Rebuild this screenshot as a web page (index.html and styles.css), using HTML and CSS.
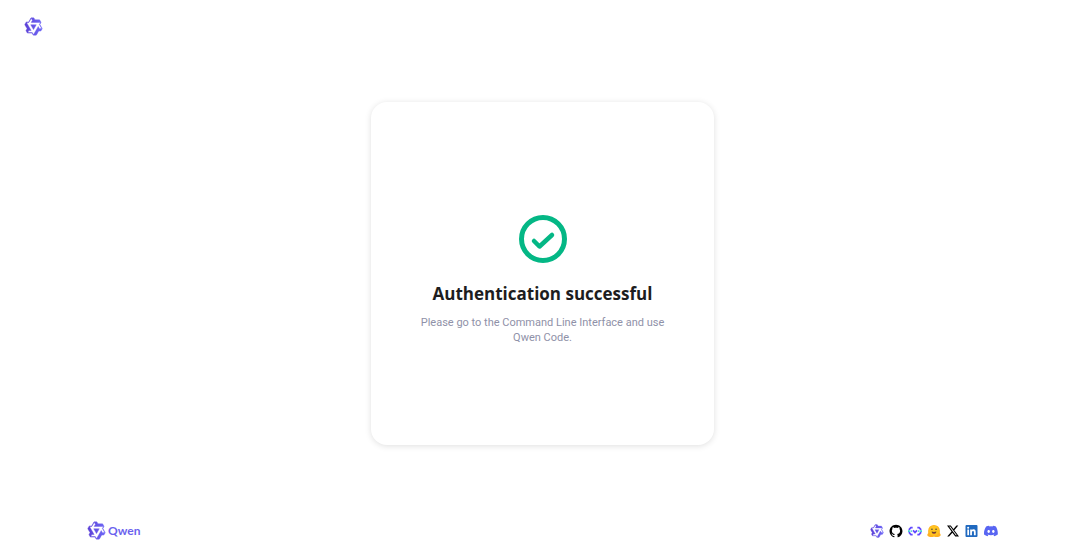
FILE: index.html
```html
<!DOCTYPE html>
<html lang="en">
<head>
<meta charset="utf-8">
<meta name="viewport" content="width=device-width, initial-scale=1">
<title>Authentication successful</title>
<link rel="stylesheet" href="styles.css">
</head>
<body>
<svg class="defs" aria-hidden="true">
  <defs>
    <linearGradient id="violet" x1="0" y1="0" x2="1" y2="0"><stop offset="0" stop-color="#5b3fd6"/><stop offset="1" stop-color="#6f69f7"/></linearGradient>
    <symbol id="qwen" viewBox="0 0 24 24"><path fill="url(#violet)" stroke="url(#violet)" stroke-width=".5" d="M12.604 1.34c.393.69.784 1.382 1.174 2.075a.18.18 0 00.157.091h5.552c.174 0 .322.11.446.327l1.454 2.57c.19.337.24.478.024.837-.26.43-.513.864-.76 1.3l-.367.658c-.106.196-.223.28-.04.512l2.652 4.637c.172.301.111.494-.043.77-.437.785-.882 1.564-1.335 2.34-.159.272-.352.375-.68.37-.777-.016-1.552-.01-2.327.016a.099.099 0 00-.081.05 575.097 575.097 0 01-2.705 4.74c-.169.293-.38.363-.725.364-.997.003-2.002.004-3.017.002a.537.537 0 01-.465-.271l-1.335-2.323a.09.09 0 00-.083-.049H4.982c-.285.03-.553-.001-.805-.092l-1.603-2.77a.543.543 0 01-.002-.54l1.207-2.12a.198.198 0 000-.197 550.951 550.951 0 01-1.875-3.272l-.79-1.395c-.16-.31-.173-.496.095-.965.465-.813.927-1.625 1.387-2.436.132-.234.304-.334.584-.335a338.3 338.3 0 012.589-.001.124.124 0 00.107-.063l2.806-4.895a.488.488 0 01.422-.246c.524-.001 1.053 0 1.583-.006L11.704 1c.341-.003.724.032.9.34zm-3.432.403a.06.06 0 00-.052.03L6.254 6.788a.157.157 0 01-.135.078H3.253c-.056 0-.07.025-.041.074l5.81 10.156c.025.042.013.062-.034.063l-2.795.015a.218.218 0 00-.2.116l-1.32 2.31c-.044.078-.021.118.068.118l5.716.008c.046 0 .08.02.104.061l1.403 2.454c.046.081.092.082.139 0l5.006-8.76.783-1.382a.055.055 0 01.096 0l1.424 2.53a.122.122 0 00.107.062l2.763-.02a.04.04 0 00.035-.02.041.041 0 000-.04l-2.9-5.086a.108.108 0 010-.113l.293-.507 1.12-1.977c.024-.041.012-.062-.035-.062H9.2c-.059 0-.073-.026-.043-.077l1.434-2.505a.107.107 0 000-.114L9.225 1.774a.06.06 0 00-.053-.031zm6.29 8.02c.046 0 .058.02.034.06l-.832 1.465-2.613 4.585a.056.056 0 01-.05.029.058.058 0 01-.05-.029L8.498 9.841c-.02-.034-.01-.052.028-.054l.216-.012 6.722-.012z"/></symbol>
  </defs>
</svg>
<header class="header">
  <a class="link" href="#" aria-label="Qwen home"><svg class="mark"><use href="#qwen"/></svg></a>
</header>
<main class="main">
  <section class="card">
    <svg class="status" viewBox="0 0 48 48" fill="none" stroke="#04b785" aria-hidden="true"><circle cx="24" cy="24" r="21.5" stroke-width="5"/><path d="M15 26l5.500 5.500L33 20" stroke-width="4.500" stroke-linecap="round" stroke-linejoin="round"/></svg>
    <h1 class="title">Authentication successful</h1>
    <p class="text">Please go to the Command Line Interface and use Qwen Code.</p>
  </section>
</main>
<footer class="footer">
  <a class="brand" href="#"><svg class="mark" aria-hidden="true"><use href="#qwen"/></svg><span>Qwen</span></a>
  <nav class="social" aria-label="Social links">
    <a class="link" href="#" aria-label="Qwen"><svg class="icon"><use href="#qwen"/></svg></a>
    <a class="link" href="#" aria-label="GitHub"><svg class="icon" viewBox="-1 -1 26 26"><path d="M12 .297c-6.630 0-12 5.373-12 12 0 5.303 3.438 9.800 8.205 11.385.6.113.82-.258.82-.577 0-.285-.010-1.040-.015-2.040-3.338.724-4.042-1.610-4.042-1.610C4.422 18.070 3.633 17.700 3.633 17.700c-1.087-.744.084-.729.084-.729 1.205.084 1.838 1.236 1.838 1.236 1.070 1.835 2.809 1.305 3.495.998.108-.776.417-1.305.76-1.605-2.665-.3-5.466-1.332-5.466-5.930 0-1.310.465-2.380 1.235-3.220-.135-.303-.54-1.523.105-3.176 0 0 1.005-.322 3.300 1.230.96-.267 1.980-.399 3-.405 1.020.006 2.040.138 3 .405 2.280-1.552 3.285-1.230 3.285-1.230.645 1.653.24 2.873.12 3.176.765.84 1.230 1.910 1.230 3.220 0 4.610-2.805 5.625-5.475 5.920.42.36.81 1.096.81 2.220 0 1.606-.015 2.896-.015 3.286 0 .315.21.69.825.57C20.565 22.092 24 17.592 24 12.297c0-6.627-5.373-12-12-12"/></svg></a>
    <a class="link" href="#" aria-label="ModelScope"><svg class="icon" viewBox="0 0 24 24" fill="none" stroke-width="3"><path stroke="#624aff" d="M8 6H5L1.500 10M8 18H5l-3.500-4M16 6h3l3.500 4M16 18h3l3.500-4M8.500 11l3.500 3.500 3.500-3.500"/><path stroke="#36cfd1" d="M0 12h3m18 0h3M4.500 12h2m11 0h2"/></svg></a>
    <a class="link" href="#" aria-label="Hugging Face"><svg class="icon" viewBox="0 0 24 24"><path fill="#ffb01f" d="M12 1.500A10 10 0 0 0 2 11.500c0 2 .1 3.500.1 4.500-1.300.8-1.800 2.500-1.200 4.200 1.600 2 5.600 2.600 8.600 2 .9-.3 1.500-.5 2.500-.5s1.600.2 2.500.5c3 .6 7 0 8.600-2 .6-1.700.1-3.400-1.200-4.200 0-1 .1-2.500.1-4.500a10 10 0 0 0-10-10z"/><circle cx="12" cy="11.500" r="8.700" fill="#ffc420"/><circle cx="8.500" cy="9" r="1.300" fill="#3a3b45"/><circle cx="15.500" cy="9" r="1.300" fill="#3a3b45"/><path fill="#6b4430" d="M8 13c2.500 1 5.500 1 8 0 0 2.500-1.700 4-4 4s-4-1.500-4-4z"/><path fill="#ef4e4e" d="M10 16c1-1 3-1 4 0-1.300 1-2.700 1-4 0z"/></svg></a>
    <a class="link" href="#" aria-label="X"><svg class="icon" viewBox="-2 -2 28 28"><path d="M18.901 1.153h3.680l-8.040 9.190L24 22.846h-7.406l-5.800-7.584-6.638 7.584H.474l8.600-9.830L0 1.154h7.594l5.243 6.932zM17.610 20.644h2.039L6.486 3.240H4.298z"/></svg></a>
    <a class="link" href="#" aria-label="LinkedIn"><svg class="icon" viewBox="-1 -2 28 28"><path fill="#2069bf" d="M22 0H2a2 2 0 0 0-2 2v20a2 2 0 0 0 2 2h20a2 2 0 0 0 2-2V2a2 2 0 0 0-2-2zM7.100 20.450H3.600V9h3.500zM5.300 7.430a2.060 2.060 0 1 1 0-4.130 2.060 2.060 0 0 1 0 4.130zM20.450 20.450h-3.560v-5.570c0-1.330 0-3.040-1.850-3.040s-2.140 1.450-2.140 2.940v5.670H9.350V9h3.410v1.560c.5-.9 1.600-1.850 3.370-1.850 3.600 0 4.270 2.370 4.270 5.460z"/></svg></a>
    <a class="link" href="#" aria-label="Discord"><svg class="icon" viewBox="0 0 24 24"><path fill="#5865f2" d="M20.317 4.370a19.800 19.800 0 0 0-4.885-1.515c-.25.38-.48.800-.67 1.250a18.300 18.300 0 0 0-5.487 0c-.2-.46-.42-.87-.68-1.250A19.700 19.700 0 0 0 3.677 4.370C.533 9.046-.32 13.580.099 18.058a19.900 19.900 0 0 0 5.993 3.030c.46-.63.880-1.300 1.226-1.994a13 13 0 0 1-1.872-.892l.372-.292c3.928 1.793 8.180 1.793 12.062 0l.373.293c-.6.350-1.220.645-1.873.891.36.698.772 1.362 1.225 1.993a19.800 19.800 0 0 0 6.002-3.030c.5-5.177-.838-9.674-3.290-13.687zM8.020 15.330c-1.183 0-2.157-1.085-2.157-2.419s.956-2.420 2.157-2.420c1.210 0 2.176 1.096 2.157 2.420 0 1.334-.956 2.419-2.157 2.419zm7.975 0c-1.183 0-2.157-1.085-2.157-2.419s.955-2.420 2.157-2.420c1.210 0 2.176 1.096 2.157 2.420 0 1.334-.946 2.419-2.157 2.419z"/></svg></a>
  </nav>
</footer>
</body>
</html>
```
FILE: styles.css
```css
* { box-sizing: border-box; }
body {
  margin: 0;
  min-height: 100vh;
  display: flex;
  flex-direction: column;
  background: #fff;
  font-family: "Open Sans", "Noto Sans", sans-serif;
}
.defs { position: absolute; width: 0; height: 0; }
.header { display: flex; padding: 17px 24px; }
.link { display: flex; }
.mark { width: 19px; height: 19px; }
.main {
  flex: 1;
  display: flex;
  align-items: center;
  justify-content: center;
  padding: 0 0 27px 5px;
}
.card {
  width: 343px;
  min-height: 343px;
  padding: 32px 48px 20px;
  display: flex;
  flex-direction: column;
  align-items: center;
  justify-content: center;
  border-radius: 16px;
  box-shadow: 0 1px 6px rgba(0, 0, 0, 0.13);
  text-align: center;
}
.status { width: 48px; height: 48px; }
.title {
  margin: 18px 0 8px;
  font-size: 17px;
  line-height: 26px;
  font-weight: 700;
  color: #1d1d20;
  white-space: nowrap;
}
.text {
  margin: 0;
  font-family: Roboto, "Open Sans", sans-serif;
  font-size: 11px;
  line-height: 15px;
  color: #8f91a8;
}
.footer {
  display: flex;
  align-items: center;
  justify-content: space-between;
  padding: 0 82px 10px 87px;
}
.brand {
  display: flex;
  align-items: center;
  gap: 2px;
  color: #6b62ee;
  font: 700 12px/19px Lato, sans-serif;
  text-decoration: none;
}
.social { display: flex; gap: 5px; }
.icon { width: 14px; height: 14px; }
```
